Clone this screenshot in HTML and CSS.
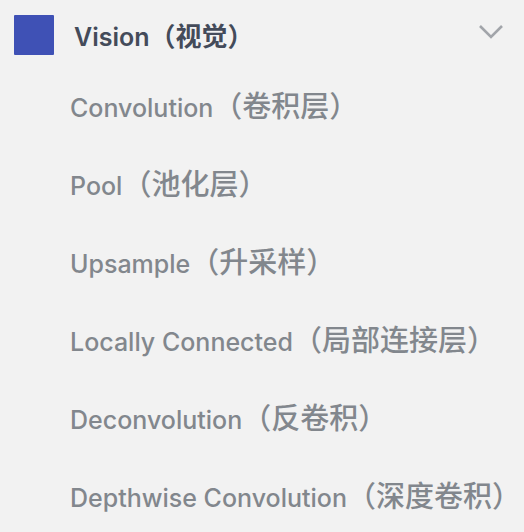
FILE: index.html
```html
<!DOCTYPE html>
<html lang="zh">
<head>
<meta charset="utf-8">
<link rel="stylesheet" href="styles.css">
</head>
<body>
<div class="panel">
  <div class="header">
    <span class="swatch"></span>
    <span class="title">Vision<span class="zh">（视觉）</span></span>
    <svg class="chevron" width="26" height="16" viewBox="0 0 26 16"><path d="M2 2 L13 13 L24 2" fill="none" stroke="#a2a5aa" stroke-width="2.6"/></svg>
  </div>
  <ul class="items">
    <li>Convolution<span class="zh">（卷积层）</span></li>
    <li>Pool<span class="zh">（池化层）</span></li>
    <li>Upsample<span class="zh">（升采样）</span></li>
    <li>Locally Connected<span class="zh">（局部连接层）</span></li>
    <li>Deconvolution<span class="zh">（反卷积）</span></li>
    <li>Depthwise Convolution<span class="zh">（深度卷积）</span></li>
  </ul>
</div>
</body>
</html>
```
FILE: styles.css
```css
html, body {
  margin: 0;
  padding: 0;
  background: #f2f2f2;
}
body {
  width: 524px;
  height: 532px;
  overflow: hidden;
  font-family: Inter, "Noto Sans CJK SC", sans-serif;
}
.panel {
  padding: 15px 0 0 14px;
}
.header {
  display: flex;
  align-items: center;
  height: 40px;
}
.swatch {
  width: 40px;
  height: 40px;
  background: #3f51b5;
  border-radius: 1px;
  flex: none;
}
.title {
  margin-left: 20px;
  font-size: 25px;
  font-weight: 600;
  color: #444b5a;
  flex: 1;
  margin-top: -2px;
}
.title .zh {
  font-size: 26px;
}
.chevron {
  margin-right: 20px;
  margin-top: -6px;
}
.items {
  list-style: none;
  margin: 0;
  padding: 0 0 0 56px;
}
.items li {
  font-size: 25px;
  font-weight: 500;
  color: #82878d;
  height: 78px;
  line-height: 78px;
  white-space: nowrap;
}
.items .zh {
  font-size: 29px;
  font-weight: 500;
}
.items li:first-child {
  margin-top: 13px;
}
```
